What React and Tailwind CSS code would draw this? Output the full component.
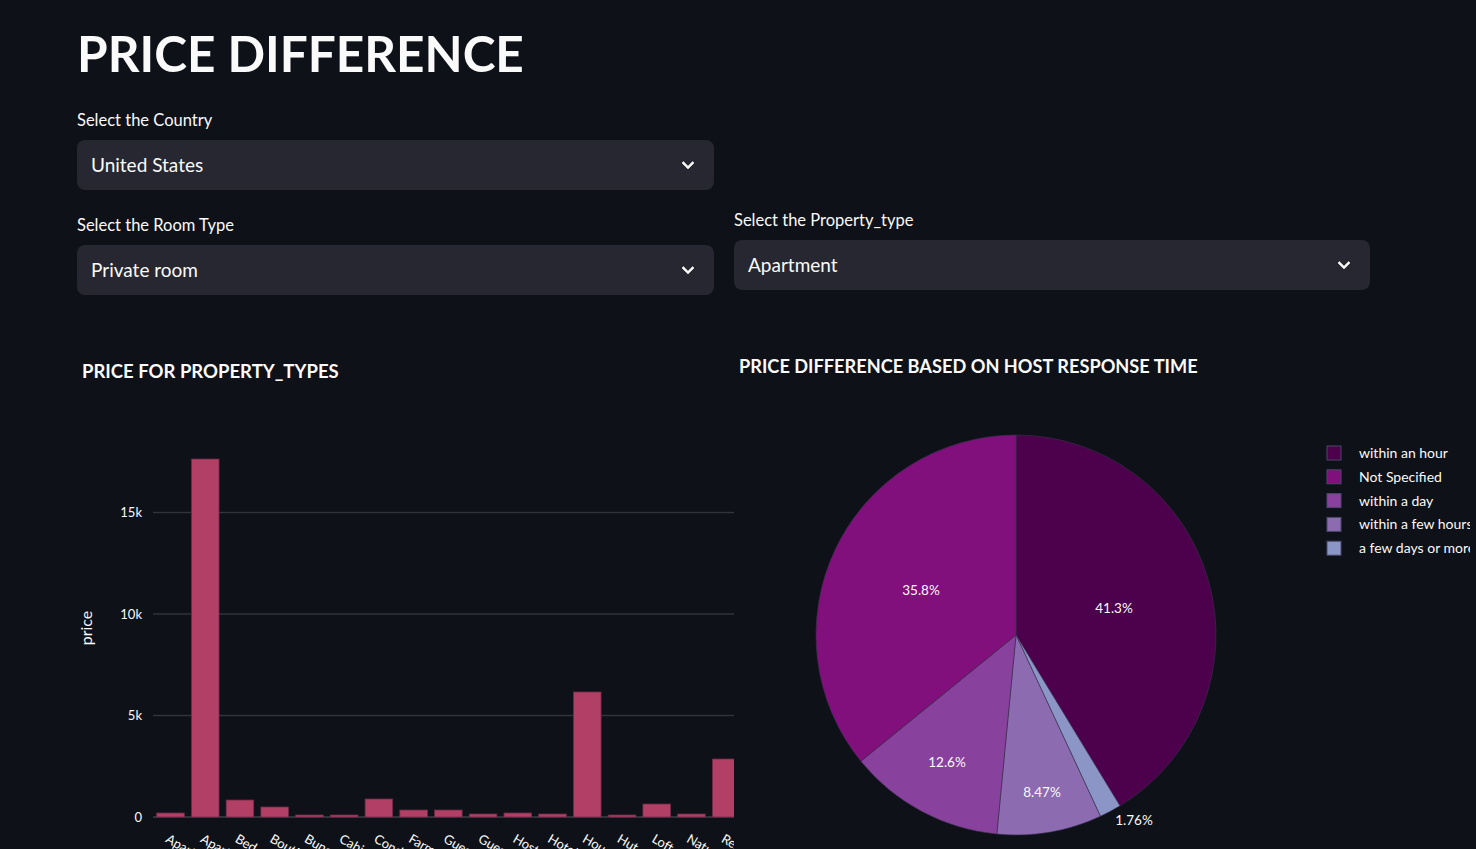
import React from 'react';

const FONT = 'Lato, "Noto Sans", sans-serif';

const bars = [
  { name: 'Aparthotel', v: 197 },
  { name: 'Apartment', v: 17635 },
  { name: 'Bed and breakfast', v: 837 },
  { name: 'Boutique hotel', v: 493 },
  { name: 'Bungalow', v: 99 },
  { name: 'Cabin', v: 99 },
  { name: 'Condominium', v: 887 },
  { name: 'Farm stay', v: 345 },
  { name: 'Guest suite', v: 345 },
  { name: 'Guesthouse', v: 148 },
  { name: 'Hostel', v: 197 },
  { name: 'Hotel', v: 148 },
  { name: 'House', v: 6158 },
  { name: 'Hut', v: 99 },
  { name: 'Loft', v: 640 },
  { name: 'Nature lodge', v: 148 },
  { name: 'Resort', v: 2857 },
  { name: 'Serviced apartment', v: 400 },
];

const slices = [
  { label: 'within an hour', color: '#4d004b', a0: 0, a1: 148.68 },
  { label: 'a few days or more', color: '#8c96c6', a0: 148.68, a1: 155.02 },
  { label: 'within a few hours', color: '#8c6bb1', a0: 155.02, a1: 185.51 },
  { label: 'within a day', color: '#88419d', a0: 185.51, a1: 230.87 },
  { label: 'Not Specified', color: '#810f7c', a0: 230.87, a1: 360 },
];

const legend = [
  { label: 'within an hour', color: '#4d004b' },
  { label: 'Not Specified', color: '#810f7c' },
  { label: 'within a day', color: '#88419d' },
  { label: 'within a few hours', color: '#8c6bb1' },
  { label: 'a few days or more', color: '#8c96c6' },
];

const pieLabels = [
  { t: '41.3%', x: 380, y: 213 },
  { t: '35.8%', x: 187, y: 195 },
  { t: '12.6%', x: 213, y: 367 },
  { t: '8.47%', x: 308, y: 397 },
  { t: '1.76%', x: 400, y: 425 },
];

const Chevron = () => (
  <svg width="24" height="24" viewBox="0 0 24 24" fill="#fafafa">
    <path d="M7.41 8.59 12 13.17l4.59-4.58L18 10l-6 6-6-6z" stroke="#fafafa" strokeWidth="0.6" />
  </svg>
);

const Select = ({ value }) => (
  <div className="h-[50px] rounded-lg bg-[#262730] flex items-center justify-between pl-[14px] pr-[14px]">
    <span className="text-[19px]">{value}</span>
    <Chevron />
  </div>
);

const Field = ({ label, value }) => (
  <div>
    <div className="text-[16.5px] leading-[24px] mb-[8px]">{label}</div>
    <Select value={value} />
  </div>
);

const BarChart = () => {
  const zero = 417;
  const k = 101.5 / 5000;
  const step = 34.73;
  const ticks = [
    { v: 0, t: '0' },
    { v: 5000, t: '5k' },
    { v: 10000, t: '10k' },
    { v: 15000, t: '15k' },
  ];
  return (
    <svg width="657" height="460" className="block" style={{ fontFamily: FONT }}>
      {ticks.map(tk => (
        <g key={tk.t}>
          <line
            x1="76"
            x2="657"
            y1={zero - tk.v * k}
            y2={zero - tk.v * k}
            stroke={tk.v === 0 ? '#3d3f4b' : '#31333f'}
            strokeWidth="1.5"
          />
          <text x="65" y={zero - tk.v * k + 4.7} textAnchor="end" fontSize="13" fill="#fafafa">
            {tk.t}
          </text>
        </g>
      ))}
      <text x="15" y="228" transform="rotate(-90 15 228)" textAnchor="middle" fontSize="16" fill="#fafafa">
        price
      </text>
      {bars.map((b, i) => {
        const x = 79.7 + step * i;
        const h = b.v * k;
        const lx = x + 8;
        return (
          <g key={b.name + i}>
            <rect x={x} y={zero - h} width="27.6" height={h} fill="#b24066" stroke="#6e2a44" strokeWidth="0.8" />
            <text x={lx} y="441.5" transform={`rotate(30 ${lx} 441.5)`} fontSize="13" fill="#fafafa">
              {b.name}
            </text>
          </g>
        );
      })}
    </svg>
  );
};

const PieChart = () => {
  const cx = 282;
  const cy = 240;
  const r = 200;
  const pt = a => {
    const rad = (a * Math.PI) / 180;
    return [cx + r * Math.sin(rad), cy - r * Math.cos(rad)];
  };
  return (
    <svg width="736" height="460" className="block" style={{ fontFamily: FONT }}>
      {slices.map(s => {
        const [x0, y0] = pt(s.a0);
        const [x1, y1] = pt(s.a1);
        const large = s.a1 - s.a0 > 180 ? 1 : 0;
        return (
          <path
            key={s.label}
            d={`M${cx} ${cy} L${x0} ${y0} A${r} ${r} 0 ${large} 1 ${x1} ${y1} Z`}
            fill={s.color}
            stroke="#3a3050"
            strokeWidth="0.6"
          />
        );
      })}
      {pieLabels.map(l => (
        <text key={l.t} x={l.x} y={l.y + 4.8} textAnchor="middle" fontSize="13.5" fill="#fafafa">
          {l.t}
        </text>
      ))}
      {legend.map((l, i) => (
        <g key={l.label}>
          <rect x="593" y={51 + i * 23.8} width="14" height="14" fill={l.color} stroke="#4a4a66" strokeWidth="1" />
          <text x="625" y={63 + i * 23.8} fontSize="14" fill="#fafafa">
            {l.label}
          </text>
        </g>
      ))}
    </svg>
  );
};

export default function App() {
  return (
    <div className="h-[849px] overflow-hidden bg-[#0e1117] text-[#fafafa] font-['Lato','Noto_Sans',sans-serif] px-[77px] pt-[23px]">
      <h1 className="text-[49.5px] leading-[60px] font-bold">PRICE DIFFERENCE</h1>

      <div className="mt-[25px] w-[637px]">
        <Field label="Select the Country" value="United States" />
      </div>

      <div className="mt-[18px] flex items-start gap-[20px]">
        {/* left column */}
        <div className="w-[637px] shrink-0 pt-[5px]">
          <Field label="Select the Room Type" value="Private room" />
          <h3 className="mt-[64px] pl-[5px] text-[18.5px] leading-[24px] font-bold">PRICE FOR PROPERTY_TYPES</h3>
          <div className="mt-[17px]">
            <BarChart />
          </div>
        </div>

        {/* right column */}
        <div className="w-[636px] shrink-0">
          <Field label="Select the Property_type" value="Apartment" />
          <h3 className="mt-[64px] pl-[5px] text-[18.2px] leading-[24px] font-bold">
            PRICE DIFFERENCE BASED ON HOST RESPONSE TIME
          </h3>
          <div className="mt-[17px]">
            <PieChart />
          </div>
        </div>
      </div>
    </div>
  );
}
